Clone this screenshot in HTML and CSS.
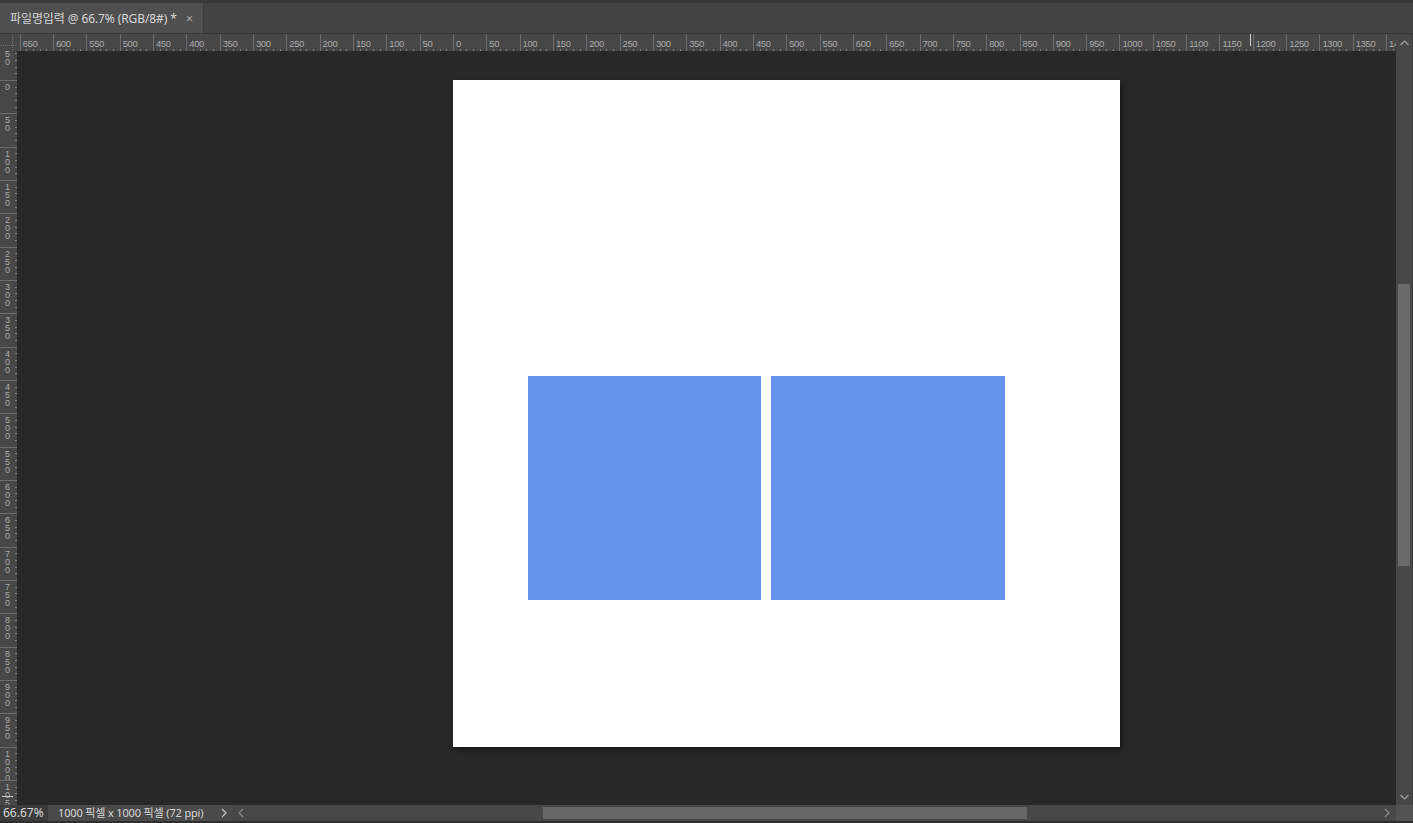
FILE: index.html
```html
<!DOCTYPE html>
<html lang="ko">
<head>
<meta charset="utf-8">
<title>파일명입력</title>
<link rel="stylesheet" href="styles.css">
</head>
<body>
<div class="app">
  <div class="topstrip"></div>
  <div class="tabbar">
    <div class="tab"><span class="tab-title">파일명입력 @ 66.7% (RGB/8#) *</span><span class="tab-close">×</span></div>
  </div>
  <div class="workspace">
    <div class="corner"><div class="corner-h"></div><div class="corner-v"></div></div>
    <div class="hruler">
      <div class="hcell first"><span>650</span></div>
      <div class="hcell"><span>600</span></div>
      <div class="hcell"><span>550</span></div>
      <div class="hcell"><span>500</span></div>
      <div class="hcell"><span>450</span></div>
      <div class="hcell"><span>400</span></div>
      <div class="hcell"><span>350</span></div>
      <div class="hcell"><span>300</span></div>
      <div class="hcell"><span>250</span></div>
      <div class="hcell"><span>200</span></div>
      <div class="hcell"><span>150</span></div>
      <div class="hcell"><span>100</span></div>
      <div class="hcell"><span>50</span></div>
      <div class="hcell"><span>0</span></div>
      <div class="hcell"><span>50</span></div>
      <div class="hcell"><span>100</span></div>
      <div class="hcell"><span>150</span></div>
      <div class="hcell"><span>200</span></div>
      <div class="hcell"><span>250</span></div>
      <div class="hcell"><span>300</span></div>
      <div class="hcell"><span>350</span></div>
      <div class="hcell"><span>400</span></div>
      <div class="hcell"><span>450</span></div>
      <div class="hcell"><span>500</span></div>
      <div class="hcell"><span>550</span></div>
      <div class="hcell"><span>600</span></div>
      <div class="hcell"><span>650</span></div>
      <div class="hcell"><span>700</span></div>
      <div class="hcell"><span>750</span></div>
      <div class="hcell"><span>800</span></div>
      <div class="hcell"><span>850</span></div>
      <div class="hcell"><span>900</span></div>
      <div class="hcell"><span>950</span></div>
      <div class="hcell"><span>1000</span></div>
      <div class="hcell"><span>1050</span></div>
      <div class="hcell"><span>1100</span></div>
      <div class="hcell"><span>1150</span></div>
      <div class="hcell"><span>1200</span></div>
      <div class="hcell"><span>1250</span></div>
      <div class="hcell"><span>1300</span></div>
      <div class="hcell"><span>1350</span></div>
      <div class="hcell"><span>1400</span></div>
      <div class="hmarker"></div>
    </div>
    <div class="vscroll">
      <div class="sbtn"><svg width="9" height="6" viewBox="0 0 9 6"><polyline points="0.5,5 4.5,1 8.5,5" fill="none" stroke="#a0a0a0" stroke-width="1.2"/></svg></div>
      <div class="vtrack"><div class="vthumb"></div></div>
      <div class="sbtn"><svg width="9" height="6" viewBox="0 0 9 6"><polyline points="0.5,1 4.5,5 8.5,1" fill="none" stroke="#a0a0a0" stroke-width="1.2"/></svg></div>
    </div>
    <div class="vruler">
      <div class="vcell first"><span>50</span></div>
      <div class="vcell"><span>0</span></div>
      <div class="vcell"><span>50</span></div>
      <div class="vcell"><span>100</span></div>
      <div class="vcell"><span>150</span></div>
      <div class="vcell"><span>200</span></div>
      <div class="vcell"><span>250</span></div>
      <div class="vcell"><span>300</span></div>
      <div class="vcell"><span>350</span></div>
      <div class="vcell"><span>400</span></div>
      <div class="vcell"><span>450</span></div>
      <div class="vcell"><span>500</span></div>
      <div class="vcell"><span>550</span></div>
      <div class="vcell"><span>600</span></div>
      <div class="vcell"><span>650</span></div>
      <div class="vcell"><span>700</span></div>
      <div class="vcell"><span>750</span></div>
      <div class="vcell"><span>800</span></div>
      <div class="vcell"><span>850</span></div>
      <div class="vcell"><span>900</span></div>
      <div class="vcell"><span>950</span></div>
      <div class="vcell"><span>1000</span></div>
      <div class="vcell"><span>1050</span></div>
      <div class="vmarker"></div>
    </div>
    <div class="pasteboard">
      <div class="document">
        <div class="shapes">
          <div class="rect r1"></div>
          <div class="rect r2"></div>
        </div>
      </div>
    </div>
  </div>
  <div class="statusbar">
    <div class="zoomval">66.67%</div>
    <div class="docinfo"><span>1000 픽셀 x 1000 픽셀 (72 ppi)</span><svg class="more" width="6" height="10" viewBox="0 0 6 10"><polyline points="1,1 5,5 1,9" fill="none" stroke="#c0c0c0" stroke-width="1.2"/></svg></div>
    <div class="hscroll">
      <div class="hbtn"><svg width="6" height="10" viewBox="0 0 6 10"><polyline points="5,1 1,5 5,9" fill="none" stroke="#8a8a8a" stroke-width="1.2"/></svg></div>
      <div class="htrack"><div class="hthumb"></div></div>
      <div class="hbtn"><svg width="6" height="10" viewBox="0 0 6 10"><polyline points="1,1 5,5 1,9" fill="none" stroke="#8a8a8a" stroke-width="1.2"/></svg></div>
    </div>
    <div class="scorner"></div>
  </div>
  <div class="bottomline"></div>
</div>
</body>
</html>
```
FILE: styles.css
```css
* { box-sizing: border-box; }
html, body { margin: 0; padding: 0; }
body {
  width: 1413px;
  height: 823px;
  overflow: hidden;
  background: #282828;
  font-family: "Noto Sans", "Noto Sans CJK KR", sans-serif;
}
.app {
  display: flex;
  flex-direction: column;
  width: 1413px;
  height: 823px;
}
.topstrip {
  height: 3px;
  background: #393939;
  flex: none;
}
.tabbar {
  height: 31px;
  flex: none;
  background: #434343;
  border-bottom: 1px solid #383838;
  display: flex;
}
.tab {
  width: 204px;
  height: 30px;
  background: #4f4f4f;
  border-right: 1px solid #3a3a3a;
  display: flex;
  align-items: center;
  padding-left: 10px;
  color: #d6d6d6;
  font-size: 12px;
  font-family: "Noto Sans", "Noto Sans CJK KR", sans-serif;
}
.tab-title { white-space: nowrap; letter-spacing: -0.1px; }
.tab-close {
  margin-left: 9px;
  color: #a8a8a8;
  font-size: 13px;
}
.workspace {
  flex: none;
  height: 771px;
  display: grid;
  grid-template-columns: 17px 1fr 17px;
  grid-template-rows: 17px 754px;
}
.corner {
  grid-column: 1; grid-row: 1;
  background: #474747;
  position: relative;
}
.corner-h {
  position: absolute; left: 1px; right: 1px; top: 11px;
  border-top: 1px dotted #6e6e6e;
}
.corner-v {
  position: absolute; top: 1px; bottom: 1px; left: 12px;
  border-left: 1px dotted #6e6e6e;
}
.hruler {
  grid-column: 2; grid-row: 1;
  background: #474747;
  display: flex;
  overflow: hidden;
  position: relative;
}
.hcell {
  flex: 0 0 33.3333px;
  height: 17px;
  border-left: 1px solid #6c6c6c;
  background-image:
    linear-gradient(#7e7e7e, #7e7e7e),
    linear-gradient(#7e7e7e, #7e7e7e),
    linear-gradient(#7e7e7e, #7e7e7e),
    linear-gradient(#7e7e7e, #7e7e7e);
  background-repeat: no-repeat;
  background-origin: border-box;
  background-size: 1px 2px;
  background-position: 6.667px 100%, 13.333px 100%, 20px 100%, 26.667px 100%;
  font-family: "Liberation Sans", sans-serif;
  font-size: 9.5px;
  letter-spacing: -0.4px;
  color: #a9a9a9;
  padding: 5px 0 0 2px;
  line-height: 9px;
  white-space: nowrap;
}
.hcell.first { margin-left: 2.667px; }
.hmarker {
  position: absolute;
  left: 1233px; top: 0;
  width: 1px; height: 12px;
  background: #cfcfcf;
}
.vruler {
  grid-column: 1; grid-row: 2;
  background: #474747;
  overflow: hidden;
  display: flex;
  flex-direction: column;
  position: relative;
}
.vcell {
  flex: 0 0 33.3333px;
  width: 17px;
  border-top: 1px solid #6c6c6c;
  background-image:
    linear-gradient(#7e7e7e, #7e7e7e),
    linear-gradient(#7e7e7e, #7e7e7e),
    linear-gradient(#7e7e7e, #7e7e7e),
    linear-gradient(#7e7e7e, #7e7e7e);
  background-repeat: no-repeat;
  background-origin: border-box;
  background-size: 2px 1px;
  background-position: 100% 6.667px, 100% 13.333px, 100% 20px, 100% 26.667px;
  font-family: "Liberation Sans", sans-serif;
  font-size: 9px;
  color: #a9a9a9;
  padding: 2px 0 0 5px;
  overflow: hidden;
}
.vcell span {
  display: block;
  width: 6px;
  word-break: break-all;
  line-height: 8px;
}
.vcell.first { margin-top: -4.333px; }
.vmarker {
  position: absolute;
  left: 2px; top: 745px;
  width: 11px; height: 1px;
  background: #d0d0d0;
}
.vscroll {
  grid-column: 3; grid-row: 1 / span 2;
  background: #474747;
  border-right: 1px solid #3a3a3a;
  display: flex;
  flex-direction: column;
}
.sbtn {
  height: 17px;
  flex: none;
  display: flex;
  align-items: center;
  justify-content: center;
}
.vtrack {
  flex: 1;
  padding-top: 233px;
  padding-left: 2px;
}
.vthumb {
  width: 12px;
  height: 282px;
  background: #6a6a6a;
}
.pasteboard {
  grid-column: 2; grid-row: 2;
  background: #282828;
  padding: 29px 0 0 436px;
  overflow: hidden;
}
.document {
  width: 667px;
  height: 667px;
  background: #ffffff;
  box-shadow: 2px 3px 6px rgba(0, 0, 0, 0.45);
  padding: 296px 0 0 75px;
}
.shapes {
  display: flex;
  gap: 10px;
}
.rect {
  height: 224px;
  background: #6593ec;
}
.r1 { width: 233px; }
.r2 { width: 234px; }
.statusbar {
  height: 16px;
  flex: none;
  display: flex;
  background: #474747;
  font-size: 12px;
  color: #d6d6d6;
}
.zoomval {
  width: 48px;
  background: #3c3c3c;
  padding-left: 3px;
  line-height: 16px;
  white-space: nowrap;
}
.docinfo {
  width: 184px;
  background: #4a4a4a;
  display: flex;
  align-items: center;
  padding-left: 10px;
  white-space: nowrap;
  line-height: 16px;
  font-size: 11px;
  letter-spacing: -0.15px;
}
.docinfo span { flex: 1; }
.docinfo .more { margin-right: 5px; }
.hscroll {
  flex: 1;
  display: flex;
  background: #474747;
}
.hbtn {
  width: 18px;
  flex: none;
  display: flex;
  align-items: center;
  justify-content: center;
}
.htrack {
  flex: 1;
  padding: 2px 0 0 293px;
}
.hthumb {
  width: 484px;
  height: 12px;
  background: #676767;
}
.scorner {
  width: 17px;
  background: #535353;
}
.bottomline {
  height: 2px;
  flex: none;
  background: #2e2e2e;
}
```
